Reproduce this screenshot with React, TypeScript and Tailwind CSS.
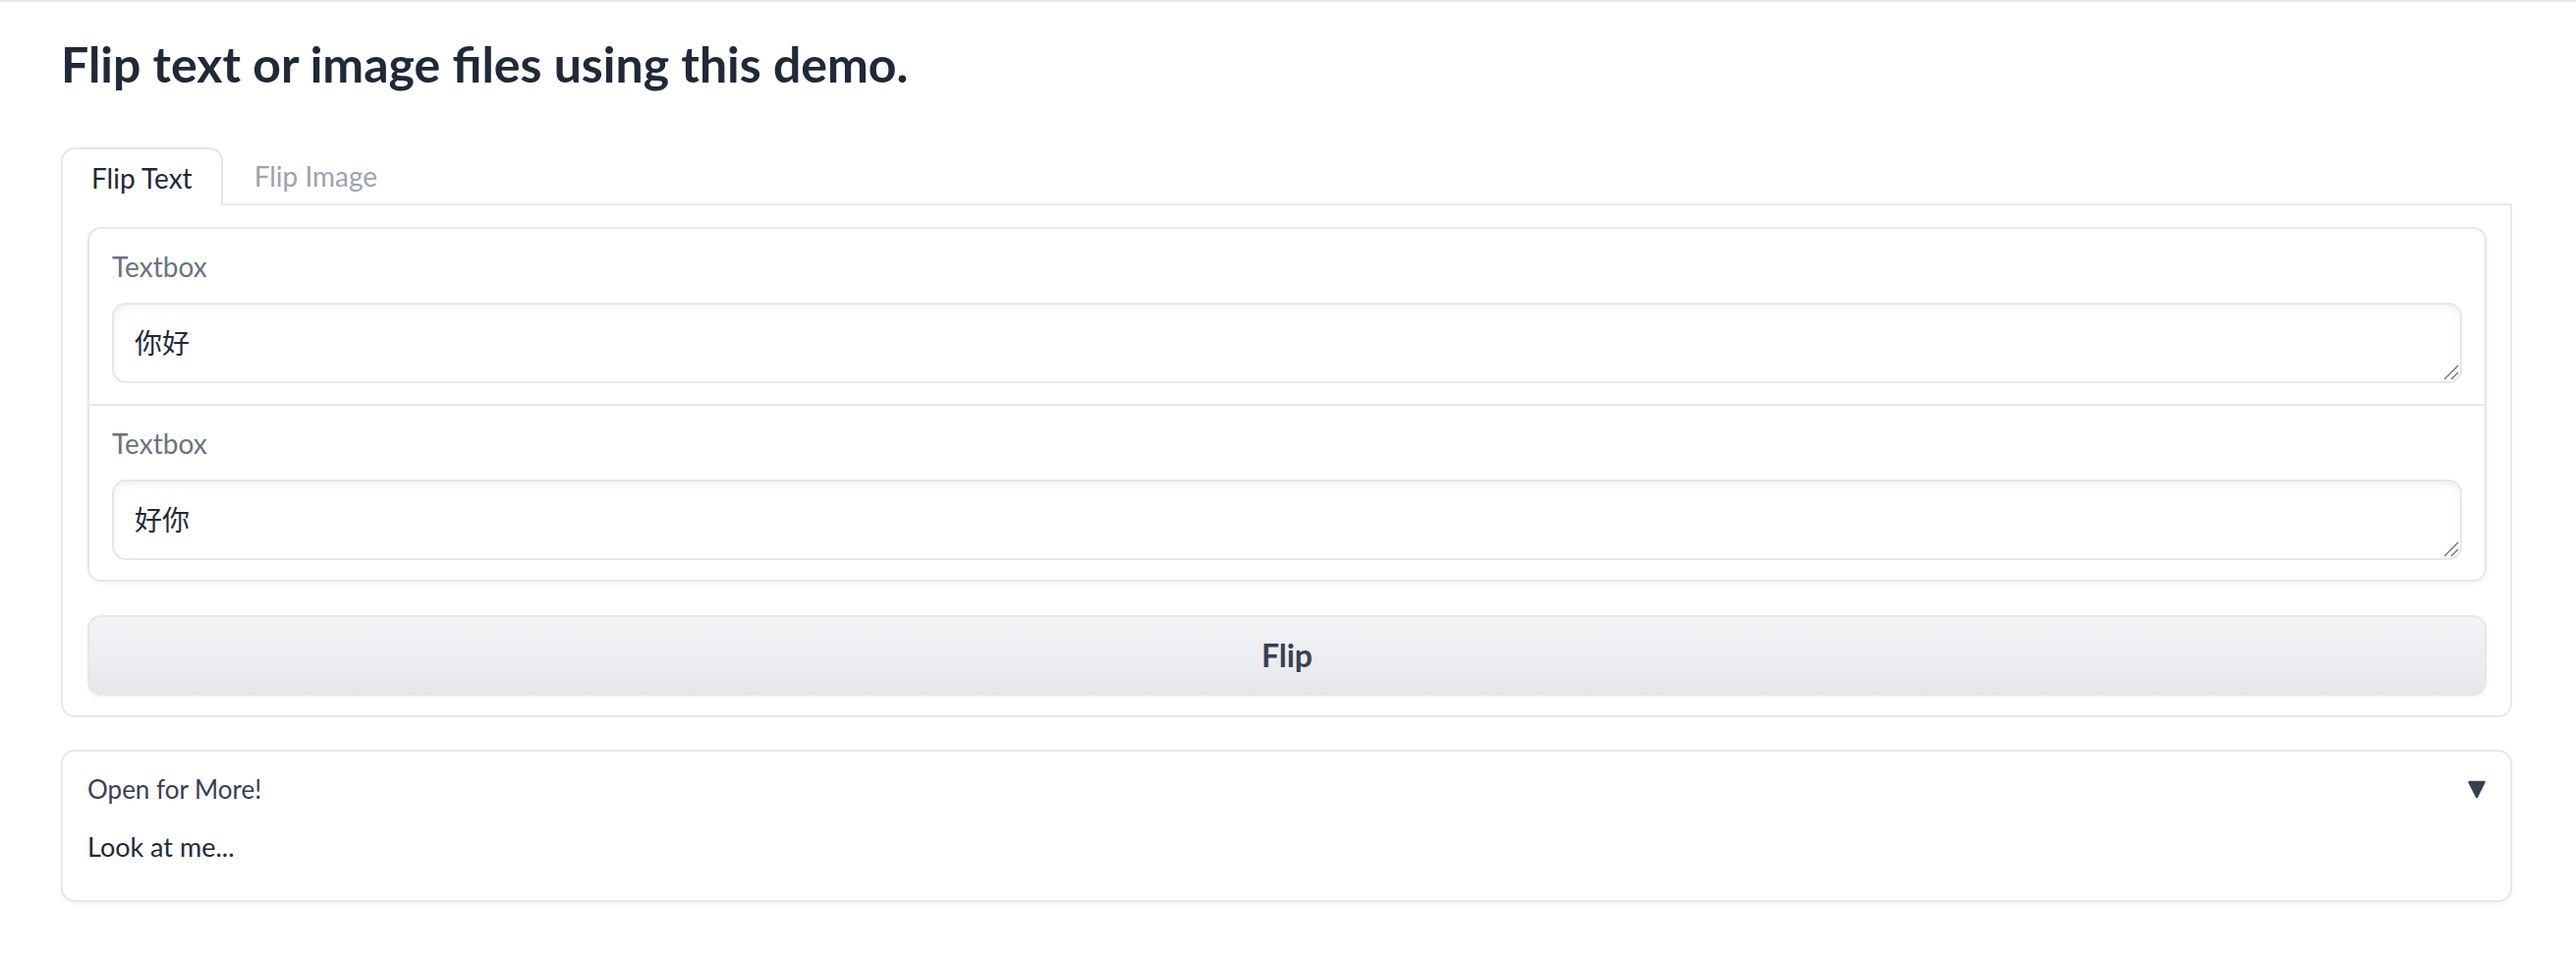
import React from 'react';

function TextBlock({ value, last }: { value: string; last?: boolean }) {
  return (
    <div className={`px-[23px] pt-[20px] ${last ? 'pb-[20px]' : 'pb-[21px] border-b-2 border-[#e5e7eb]'}`}>
      <label className="block text-[28px] leading-[36px] text-[#6b7280] mb-[19px]">Textbox</label>
      <div className="relative">
        <textarea
          readOnly
          rows={1}
          value={value}
          className="block w-full h-[82px] border-2 border-[#e5e7eb] rounded-[14px] px-[21px] py-[21px] text-[28px] leading-[36px] text-[#1f2937] bg-white shadow-[inset_0_4px_8px_rgba(0,0,0,0.05)] outline-none resize-none"
        />
        {/* resize grip */}
        <svg className="absolute right-[3px] bottom-[3px]" width="16" height="16" viewBox="0 0 16 16">
          <line x1="1" y1="15" x2="15" y2="1" stroke="#6b6b6b" strokeWidth="1.3" />
          <line x1="8" y1="15" x2="15" y2="8" stroke="#6b6b6b" strokeWidth="1.3" />
        </svg>
      </div>
    </div>
  );
}

export default function App() {
  return (
    <div className="min-h-screen bg-white border-t-2 border-[#e5e7eb] font-['Lato','Noto_Sans_CJK_SC',sans-serif] text-[#1f2937]">
      <div className="pl-[62px] pr-[65px] pt-[35px]">
        <h1 className="text-[50px] leading-[56px] font-bold text-[#1f2937]">
          Flip text or image files using this demo.
        </h1>

        <div className="mt-[57px]">
          <div className="flex border-b-2 border-[#e5e7eb]">
            <button className="relative -mb-[2px] h-[59px] px-[29px] border-2 border-b-0 border-[#e5e7eb] rounded-t-[14px] bg-white text-[28px] text-[#1f2937]">
              Flip Text
            </button>
            <button className="h-[57px] px-[32px] text-[28px] text-[#9ca3af]">Flip Image</button>
          </div>

          <div className="border-2 border-t-0 border-[#e5e7eb] rounded-b-[14px] pl-[25px] pr-[24px] pt-[22px] pb-[20px]">
            <div className="border-2 border-[#e5e7eb] rounded-[14px] bg-white shadow-[0_2px_4px_rgba(0,0,0,0.05)]">
              <TextBlock value="你好" />
              <TextBlock value="好你" last />
            </div>

            <button className="mt-[34px] w-full h-[82px] border-2 border-[#e5e7eb] rounded-[14px] bg-gradient-to-b from-[#f3f4f6] to-[#e5e7eb] shadow-[0_2px_4px_rgba(0,0,0,0.05)] text-[32px] font-bold text-[#374151]">
              Flip
            </button>
          </div>
        </div>

        <div className="mt-[33px] border-2 border-[#e5e7eb] rounded-[14px] shadow-[0_2px_4px_rgba(0,0,0,0.05)] px-[25px] pt-[20px] pb-[36px]">
          <div className="flex items-center justify-between">
            <span className="text-[26px] leading-[36px] text-[#374151]">Open for More!</span>
            <svg width="18" height="19" viewBox="0 0 18 19">
              <polygon points="1.5,2 16.5,2 9,17" fill="#374151" stroke="#374151" strokeWidth="2.5" strokeLinejoin="round" />
            </svg>
          </div>
          <p className="mt-[23px] text-[27px] leading-[36px] text-[#1f2937]">Look at me...</p>
        </div>
      </div>
    </div>
  );
}
